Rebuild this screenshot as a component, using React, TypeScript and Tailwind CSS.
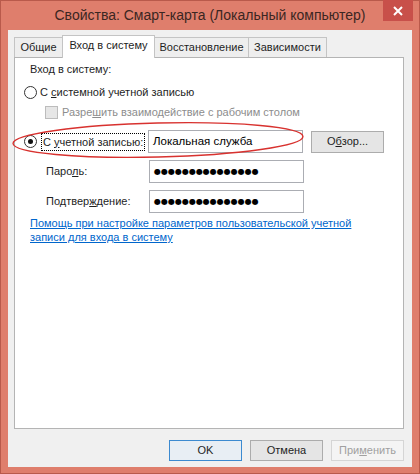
import React from "react"

const dots = "●".repeat(15)

function Radio({ checked }: { checked?: boolean }) {
  return (
    <span className="flex h-[13px] w-[13px] shrink-0 items-center justify-center rounded-full border border-[#333] bg-white">
      {checked && <span className="h-[5px] w-[5px] rounded-full bg-[#111]" />}
    </span>
  )
}

function Field({ children }: { children: React.ReactNode }) {
  return (
    <div className="flex h-[23px] w-[155px] items-center border border-[#abadb3] bg-white px-[4px] text-[11.5px] text-black">
      {children}
    </div>
  )
}

function Secret() {
  return (
    <Field>
      <span className="font-['DejaVu_Sans',sans-serif] text-[8px] tracking-[0px]">{dots}</span>
    </Field>
  )
}

export default function App() {
  return (
    <div className="flex h-[474px] w-[420px] flex-col border border-[#b95a4b] bg-[#df7e6c] font-['Liberation_Sans',Arial,sans-serif] text-[11px] text-[#1e1e1e]">
      {/* title bar */}
      <div className="relative flex h-[29px] shrink-0 items-center justify-center">
        <span className="text-[14px] text-[#3b2622]">Свойства: Смарт-карта (Локальный компьютер)</span>
        <button
          type="button"
          className="absolute right-[6px] top-[-1px] flex h-[21px] w-[30px] items-center justify-center bg-[#c8504a] text-white"
        >
          <svg width="10" height="10" viewBox="0 0 10 10" aria-hidden="true">
            <path d="M1 1 L9 9 M9 1 L1 9" stroke="white" strokeWidth="2" />
          </svg>
        </button>
      </div>

      {/* client */}
      <div className="mx-[7px] flex h-[437px] flex-col bg-[#f0f0f0] pl-[6px] pr-[8px] pt-[5px]">
        <div className="flex items-end">
          <div className="flex h-[20px] w-[48px] items-center justify-center border border-b-0 border-r-0 border-[#c4c4c4] bg-[#eeeeee]">
            Общие
          </div>
          <div className="relative z-10 -mb-px flex h-[23px] w-[93px] items-center justify-center border border-b-0 border-[#c4c4c4] bg-white pb-[3px]">
            Вход в систему
          </div>
          <div className="flex h-[20px] w-[94px] items-center justify-center border border-b-0 border-l-0 border-[#c4c4c4] bg-[#eeeeee]">
            Восстановление
          </div>
          <div className="flex h-[20px] w-[78px] items-center justify-center border border-b-0 border-l-0 border-[#c4c4c4] bg-[#eeeeee]">
            Зависимости
          </div>
        </div>

        {/* tab panel */}
        <div className="relative flex h-[372px] flex-col border border-[#b4b4b4] bg-white">
          <div className="ml-[15px] mt-[4px] flex h-[14px] items-center">Вход в систему:</div>

          <div className="ml-[9px] mt-[9px] flex h-[14px] items-center gap-[3px]">
            <Radio />
            <span className="whitespace-nowrap">
              С <u>с</u>истемной учетной записью
            </span>
          </div>

          <div className="ml-[30px] mt-[6px] flex h-[14px] items-center gap-[4px] text-[#8d8d8d]">
            <span className="h-[13px] w-[13px] border border-[#bcbcbc] bg-[#e6e6e6]" />
            <span className="whitespace-nowrap">
              Разре<u>ш</u>ить взаимодействие с рабочим столом
            </span>
          </div>

          <div className="ml-[9px] mt-[11px] flex h-[23px] items-center">
            <Radio checked />
            <span className="ml-[4px] block h-[18px] w-[104px] whitespace-nowrap border border-dotted border-black pl-[1px] leading-[16px]">
              С <u>у</u>четной записью:
            </span>
            <span className="ml-[3px]">
              <Field>Локальная служба</Field>
            </span>
            <button
              type="button"
              className="ml-[8px] flex h-[22px] w-[73px] items-center justify-center border border-[#acacac] bg-[#e5e5e5]"
            >
              О<u>б</u>зор...
            </button>
          </div>

          <div className="ml-[31px] mt-[7px] flex h-[23px] items-center">
            <span className="w-[103px]">
              Паро<u>л</u>ь:
            </span>
            <Secret />
          </div>

          <div className="ml-[31px] mt-[7px] flex h-[23px] items-center">
            <span className="w-[103px]">
              Подтвер<u>ж</u>дение:
            </span>
            <Secret />
          </div>

          <a href="#" className="ml-[15px] mt-[3px] leading-[14px] text-[#0066cc] underline">
            Помощь при настройке параметров пользовательской учетной
            <br />
            записи для входа в систему
          </a>

          <svg
            className="pointer-events-none absolute left-[-4px] top-[62px]"
            width="300"
            height="42"
            viewBox="0 0 300 42"
            aria-hidden="true"
          >
            <ellipse
              cx="147"
              cy="20"
              rx="145"
              ry="17"
              transform="rotate(-1.4 147 20)"
              fill="none"
              stroke="#d8322f"
              strokeWidth="1.4"
            />
          </svg>
        </div>

        {/* dialog buttons */}
        <div className="mt-[11px] flex justify-end gap-[8px]">
          <button
            type="button"
            className="flex h-[21px] w-[73px] items-center justify-center border border-[#3c8ad0] bg-[#e8eef4]"
          >
            OK
          </button>
          <button
            type="button"
            className="flex h-[21px] w-[73px] items-center justify-center border border-[#acacac] bg-[#e5e5e5]"
          >
            Отмена
          </button>
          <button
            type="button"
            className="flex h-[21px] w-[73px] items-center justify-center border border-[#d5d5d5] bg-[#f4f4f4] text-[#a0a0a0]"
          >
            При<u>м</u>енить
          </button>
        </div>
      </div>
    </div>
  )
}
